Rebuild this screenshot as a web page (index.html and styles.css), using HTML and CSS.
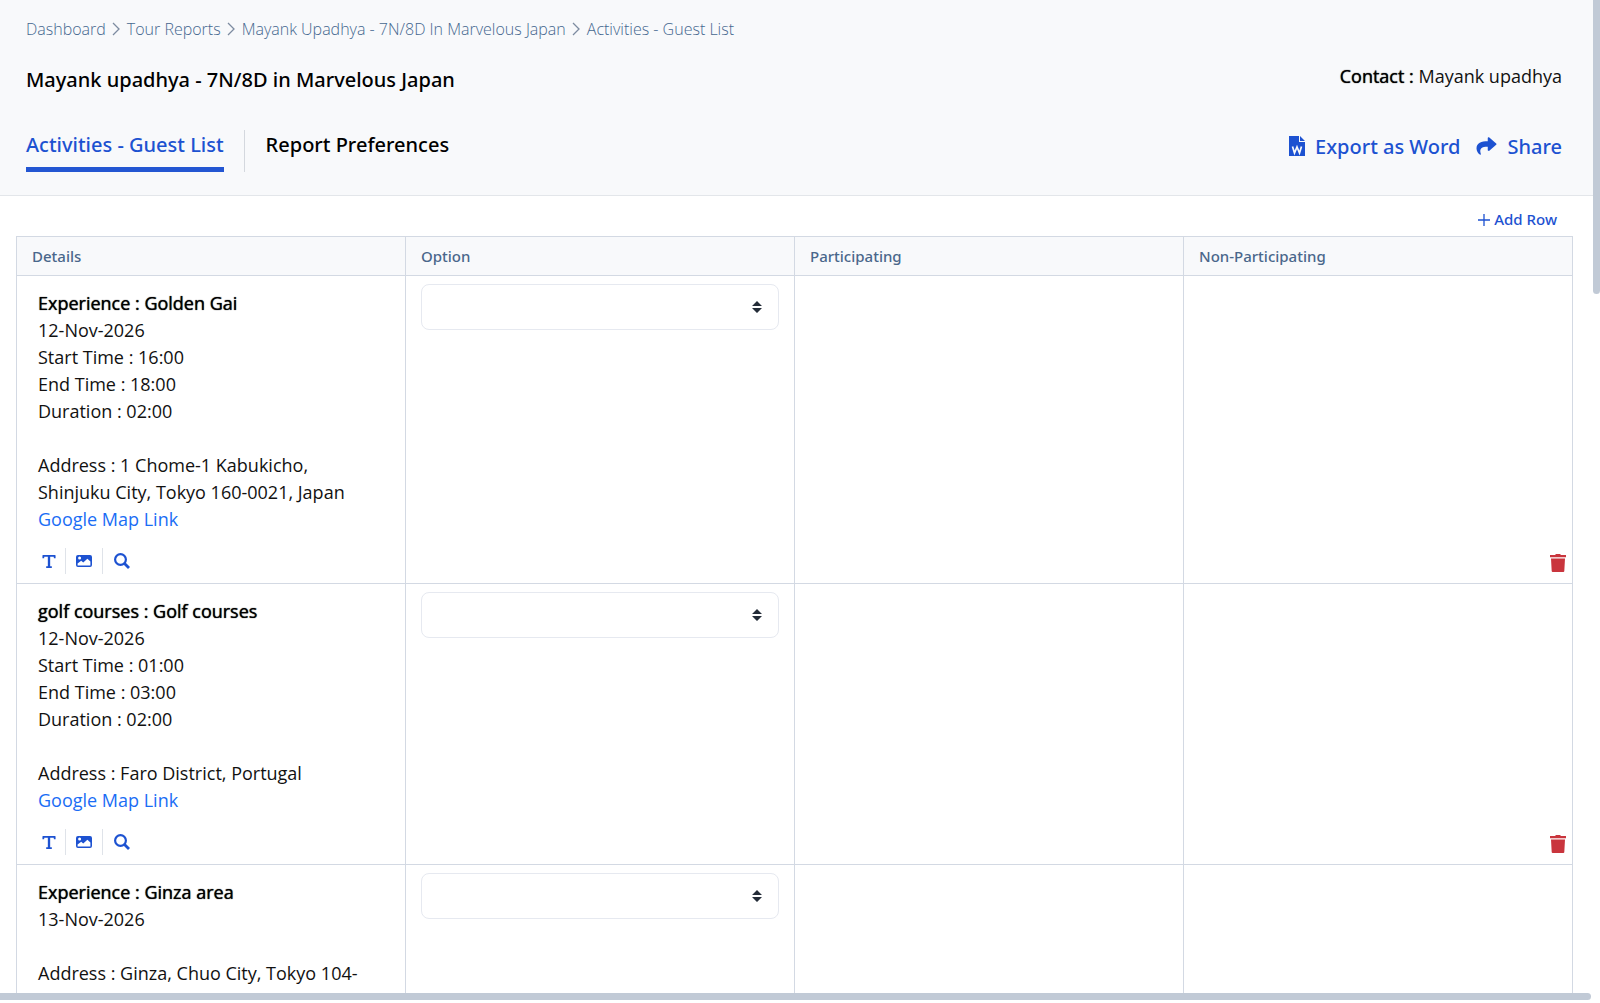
FILE: index.html
```html
<!DOCTYPE html>
<html lang="en">
<head>
  <meta charset="UTF-8" />
  <meta name="viewport" content="width=device-width, initial-scale=1.0" />
  <title>Activities - Guest List</title>
  <link rel="stylesheet" href="styles.css">
</head>
<body>
  <!-- shared icons -->
  <svg class="sprite" aria-hidden="true">
    <symbol id="chevron" viewBox="0 0 8 14"><path d="M1 1l6 6-6 6" fill="none" stroke="currentColor" stroke-width="1.3"/></symbol>
    <symbol id="text" viewBox="0 0 448 512"><path d="M432 32H16A16 16 0 0 0 0 48v96h56l8-48h120v320h-56v64h192v-64h-56V96h120l8 48h56V48a16 16 0 0 0-16-16z"/></symbol>
    <symbol id="image" viewBox="0 0 16 12"><path fill-rule="evenodd" d="M2 0h12a2 2 0 0 1 2 2v8a2 2 0 0 1-2 2H2a2 2 0 0 1-2-2V2a2 2 0 0 1 2-2zM1.6 8.4v2h12.8V6.6L11.4 3.8 7.2 7.6 5.2 5.8zM3.6 1.5a1.5 1.5 0 1 0 0 3 1.5 1.5 0 0 0 0-3z"/></symbol>
    <symbol id="search" viewBox="0 0 16 16"><g fill="none" stroke="currentColor"><circle cx="6.5" cy="6.5" r="5.4" stroke-width="2.2"/><path d="M10.5 10.5l4.5 4.5" stroke-width="2.8"/></g></symbol>
    <symbol id="trash" viewBox="0 0 16 18"><path d="M5.5 0h5v1H16v2.3H0V1h5.5zM1 4.5h14L14.3 17a1 1 0 0 1-1 1H2.7a1 1 0 0 1-1-1z"/></symbol>
  </svg>

  <main class="page">
    <header class="header">
      <nav class="breadcrumb" aria-label="Breadcrumb">
        <a href="#">Dashboard</a>
        <svg class="chevron"><use href="#chevron"/></svg>
        <a href="#">Tour Reports</a>
        <svg class="chevron"><use href="#chevron"/></svg>
        <a href="#">Mayank Upadhya - 7N/8D In Marvelous Japan</a>
        <svg class="chevron"><use href="#chevron"/></svg>
        <a href="#">Activities - Guest List</a>
      </nav>
      <div class="title-row">
        <h1>Mayank upadhya - 7N/8D in Marvelous Japan</h1>
        <div class="contact"><b>Contact :</b> Mayank upadhya</div>
      </div>
      <div class="tab-row">
        <nav class="tabs">
          <a href="#" class="tab active">Activities - Guest List</a>
          <a href="#" class="tab">Report Preferences</a>
        </nav>
        <div class="actions">
          <button type="button" class="action">
            <svg class="word-icon" viewBox="0 0 16 20"><path d="M0 0h10v6h6v14H0zM11 0l5 5h-5z"/><path d="M3.5 10.5l2 6.5 2.5-6 2.5 6 2-6.5" fill="none" stroke="#f8f9fb" stroke-width="1.7"/></svg>
            Export as Word
          </button>
          <button type="button" class="action">
            <svg class="share-icon" viewBox="0 0 512 512"><path d="M503.7 189.8L327.7 37.9C312.3 24.5 288 35.3 288 56v80.1C127.4 137.9 0 170.1 0 322.3c0 61.4 39.6 122.3 83.3 154.1 13.7 9.9 33.1-2.5 28.1-18.6C66.1 312.8 132.9 274.3 288 272.1V360c0 20.7 24.3 31.5 39.7 18.2l176-152c11.1-9.6 11.1-26.8 0-36.4z"/></svg>
            Share
          </button>
        </div>
      </div>
    </header>

    <section class="content">
      <div class="toolbar">
        <button type="button" class="add-row">
          <svg class="plus" viewBox="0 0 12 12"><path d="M6 0v12M0 6h12" stroke="currentColor" stroke-width="1.3"/></svg>
          Add Row
        </button>
      </div>
      <table class="guest-table">
        <thead>
          <tr><th>Details</th><th>Option</th><th>Participating</th><th>Non-Participating</th></tr>
        </thead>
        <tbody>
          <tr>
            <td class="details">
              <p>
                <b>Experience : Golden Gai</b><br>
                12-Nov-2026<br>
                Start Time : 16:00<br>
                End Time : 18:00<br>
                Duration : 02:00
              </p>
              <p>
                Address : 1 Chome-1 Kabukicho, Shinjuku City, Tokyo 160-0021, Japan<br>
                <a href="#" class="map-link">Google Map Link</a>
              </p>
              <div class="tools">
                <button type="button" aria-label="Text"><svg class="icon-text"><use href="#text"/></svg></button>
                <button type="button" aria-label="Image"><svg class="icon-image"><use href="#image"/></svg></button>
                <button type="button" aria-label="Search"><svg class="icon-search"><use href="#search"/></svg></button>
              </div>
            </td>
            <td class="option"><select aria-label="Option"><option></option></select></td>
            <td></td>
            <td class="last"><button type="button" class="delete" aria-label="Delete row"><svg><use href="#trash"/></svg></button></td>
          </tr>
          <tr>
            <td class="details">
              <p>
                <b>golf courses : Golf courses</b><br>
                12-Nov-2026<br>
                Start Time : 01:00<br>
                End Time : 03:00<br>
                Duration : 02:00
              </p>
              <p>
                Address : Faro District, Portugal<br>
                <a href="#" class="map-link">Google Map Link</a>
              </p>
              <div class="tools">
                <button type="button" aria-label="Text"><svg class="icon-text"><use href="#text"/></svg></button>
                <button type="button" aria-label="Image"><svg class="icon-image"><use href="#image"/></svg></button>
                <button type="button" aria-label="Search"><svg class="icon-search"><use href="#search"/></svg></button>
              </div>
            </td>
            <td class="option"><select aria-label="Option"><option></option></select></td>
            <td></td>
            <td class="last"><button type="button" class="delete" aria-label="Delete row"><svg><use href="#trash"/></svg></button></td>
          </tr>
          <tr>
            <td class="details">
              <p>
                <b>Experience : Ginza area</b><br>
                13-Nov-2026
              </p>
              <p>Address : Ginza, Chuo City, Tokyo 104-</p>
            </td>
            <td class="option"><select aria-label="Option"><option></option></select></td>
            <td></td>
            <td></td>
          </tr>
        </tbody>
      </table>
    </section>
  </main>
  <div class="scroll-y"></div>
  <div class="scroll-x"></div>
</body>
</html>
```
FILE: styles.css
```css
* {
  box-sizing: border-box;
}
body {
  margin: 0;
  height: 100vh;
  display: grid;
  grid-template-columns: 1fr 7px;
  grid-template-rows: 1fr 7px;
  padding-bottom: 3px;
  overflow: hidden;
  font-family: 'Open Sans', sans-serif;
  font-size: 18px;
  line-height: 27px;
  color: #111;
  background: #fff;
}
a {
  color: inherit;
  text-decoration: none;
}
b {
  font-weight: 400;
  color: #000;
  text-shadow: 0 0 1px currentColor;
}
button {
  font: inherit;
  color: #1d52d1;
  background: none;
  border: 0;
  padding: 0;
  cursor: pointer;
}
svg {
  fill: currentColor;
}
.sprite {
  display: none;
}
.page {
  min-width: 0;
  min-height: 0;
  overflow: hidden;
}

/* header */
.header {
  background: #f8f9fb;
  border-bottom: 1px solid #e3e6ea;
  padding: 16px 31px 23px 26px;
}
.breadcrumb {
  display: flex;
  align-items: center;
  gap: 6px;
  font-size: 16px;
  font-weight: 300;
  line-height: 26px;
  color: #45678f;
}
.chevron {
  width: 8px;
  height: 14px;
  margin-right: 1px;
  color: #7d8ca0;
}
.title-row {
  display: flex;
  justify-content: space-between;
  margin-top: 21px;
}
h1,
.tabs,
.action {
  font-family: 'Noto Sans', 'Open Sans', sans-serif;
  font-size: 20px;
  font-weight: 500;
}
h1 {
  margin: 0;
  line-height: 33px;
  color: #000;
}
.contact {
  line-height: 26px;
}
.tab-row {
  display: flex;
  justify-content: space-between;
  margin-top: 34px;
}
.tabs {
  display: flex;
  color: #000;
}
.tab {
  line-height: 30px;
  height: 42px;
}
.tab.active {
  color: #1d52d1;
  border-bottom: 5px solid #2356d2;
}
.tab + .tab {
  margin-left: 20px;
  padding-left: 21px;
  border-left: 1px solid #d4d8de;
}
.actions {
  display: flex;
  gap: 16px;
}
.action {
  display: flex;
  align-items: center;
  height: 32px;
}
.word-icon {
  width: 16px;
  height: 20px;
  margin-right: 10px;
}
.share-icon {
  width: 21px;
  height: 20px;
  margin-right: 10px;
}

/* table */
.content {
  padding: 8px 20px 0 16px;
}
.toolbar {
  display: flex;
  justify-content: flex-end;
  padding: 0 16px 1px 0;
}
.add-row,
th {
  font-family: 'Noto Sans', 'Open Sans', sans-serif;
  font-size: 15px;
  font-weight: 500;
}
.add-row {
  display: flex;
  align-items: center;
  gap: 4px;
  height: 31px;
}
.plus {
  width: 12px;
  height: 12px;
}
.guest-table {
  width: 100%;
  table-layout: fixed;
  border-collapse: collapse;
}
th,
td {
  border: 1px solid #d3d9e3;
  vertical-align: top;
}
th {
  padding: 6px 15px;
  line-height: 26px;
  text-align: left;
  color: #4a678b;
  background: #f8f9fb;
}
td {
  padding: 0;
}
.details {
  padding: 14px 30px 9px 21px;
}
.details p {
  margin: 0 0 27px;
}
.details p:nth-of-type(2) {
  margin-bottom: 15px;
}
.map-link {
  color: #1a6df5;
}
.tools {
  display: flex;
  height: 26px;
}
.tools button {
  display: flex;
  align-items: center;
  justify-content: center;
  width: 37px;
  border-right: 1px solid #dfe3e9;
}
.tools button:first-child {
  width: 28px;
  justify-content: flex-start;
  padding-left: 4px;
}
.tools button:last-child {
  border: 0;
}
.icon-text {
  width: 14px;
  height: 15px;
}
.icon-image {
  width: 16px;
  height: 12px;
}
.icon-search {
  width: 16px;
  height: 16px;
}
.option {
  padding: 8px 15px;
}
select {
  display: block;
  width: 100%;
  height: 46px;
  border: 1px solid #e6e9f0;
  border-radius: 8px;
  appearance: none;
  font: inherit;
  background: #fff url("data:image/svg+xml,%3Csvg xmlns='http://www.w3.org/2000/svg' viewBox='0 0 10 12'%3E%3Cpath fill='%23242c38' d='M5 0l5 5H0zM0 7h10L5 12z'/%3E%3C/svg%3E") no-repeat right 16px center / 10px 12px;
}
.last {
  vertical-align: bottom;
  text-align: right;
  padding: 0 6px 11px;
}
.delete {
  display: inline-block;
  vertical-align: bottom;
  color: #c9353d;
}
.delete svg {
  display: block;
  width: 16px;
  height: 18px;
}

/* scrollbars */
.scroll-y {
  height: 294px;
  background: #c1cad6;
  border-radius: 0 0 4px 4px;
}
.scroll-x {
  margin-right: 2px;
  background: #c1cad6;
  border-radius: 0 4px 4px 0;
}
```
